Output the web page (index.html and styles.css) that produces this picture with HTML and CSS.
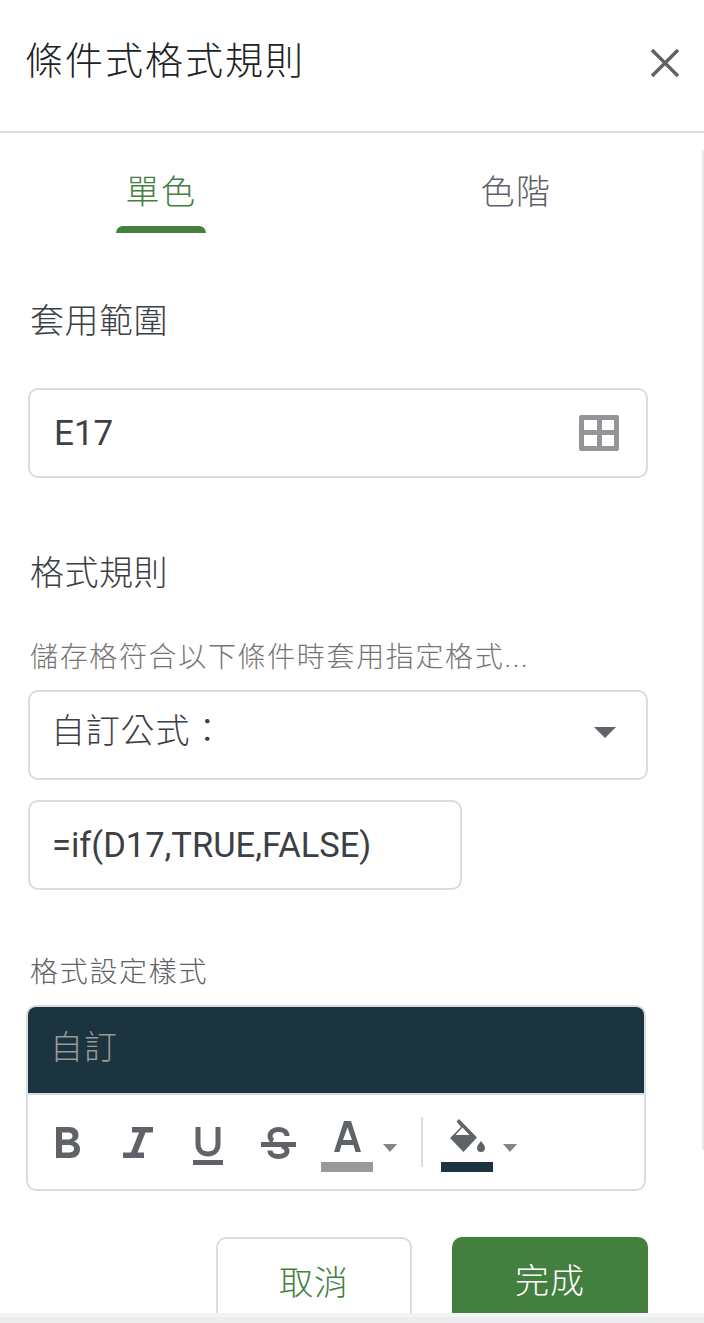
FILE: index.html
```html
<!DOCTYPE html>
<html lang="zh-Hant">
<head>
  <meta charset="UTF-8" />
  <title>條件式格式規則</title>
  <link rel="stylesheet" href="styles.css">
</head>
<body>

  <div class="panel">
    <div class="header">
      <div class="title">條件式格式規則</div>
      <svg class="close" width="30" height="30" viewBox="0 0 30 30"><path d="M2 2 L28 28 M28 2 L2 28" stroke="#5f6368" stroke-width="3.4" fill="none"/></svg>
    </div>

    <div class="content">
      <div class="tabs">
        <div class="tab active">單色</div>
        <div class="tab">色階</div>
      </div>

      <div class="section-title range-title">套用範圍</div>
      <div class="field range-field">
        <span>E17</span>
        <svg width="40" height="36" viewBox="0 0 40 36"><path fill-rule="evenodd" fill="#939598" d="M2 0 H38 a2 2 0 0 1 2 2 V34 a2 2 0 0 1 -2 2 H2 a2 2 0 0 1 -2 -2 V2 a2 2 0 0 1 2 -2 Z M5 5 V15 H18 V5 Z M23 5 V15 H35 V5 Z M5 20 V31 H18 V20 Z M23 20 V31 H35 V20 Z"/></svg>
      </div>

      <div class="section-title rule-title">格式規則</div>
      <div class="hint">儲存格符合以下條件時套用指定格式...</div>
      <div class="field select-field">
        <span>自訂公式：</span>
        <div class="caret"></div>
      </div>
      <div class="field formula-field">=if(D17,TRUE,FALSE)</div>

      <div class="style-label">格式設定樣式</div>
      <div class="style-box">
        <div class="preview">自訂</div>
        <div class="toolbar">
          <svg class="tool tool-bold" width="24" height="31" viewBox="0 0 24 31"><path fill-rule="evenodd" fill="#5f6368" d="M0 0 H13 C19 0 22.500 3 22.500 8 C22.500 11 21 13.500 18 14.500 C21.500 15.500 24 18 24 22 C24 28 20 31 14 31 H0 Z M6 5.500 V12.500 H12 C15 12.500 16.500 11 16.500 9 C16.500 6.800 15 5.500 12 5.500 Z M6 18 V25.500 H13 C16 25.500 18 24.500 18 21.800 C18 19.200 16 18 13 18 Z"/></svg>
          <svg class="tool tool-italic" width="30" height="31" viewBox="0 0 30 31"><path fill="#5f6368" d="M9 0 H30 V5.500 H22.500 L14.500 25.500 H21 V31 H0 V25.500 H8 L16 5.500 H9 Z"/></svg>
          <svg class="tool tool-under" width="30" height="38" viewBox="0 0 30 38"><path fill="none" stroke="#5f6368" stroke-width="5" d="M5 0 V17 C5 23 9 27 15 27 C21 27 25 23 25 17 V0"/><rect x="0" y="33" width="30" height="5" fill="#5f6368"/></svg>
          <svg class="tool tool-strike" width="35" height="32" viewBox="0 0 35 32"><path fill="none" stroke="#5f6368" stroke-width="5" d="M26 9 C26 4.500 22 2.500 17.500 2.500 C13 2.500 9 5 9 9 C9 11 10 13 12 14 M21 19 C24 20 26 21.500 26 24 C26 27.500 22 29.500 17.500 29.500 C13 29.500 9 27.500 9 23.500"/><rect x="0" y="15" width="35" height="5" fill="#5f6368"/></svg>
          <div class="color-tool">
            <div class="color-icon">
              <svg width="27" height="31" viewBox="0 0 27 31"><path fill-rule="evenodd" fill="#5f6368" d="M10 0 H17 L27 31 H21.500 L19.500 24 H7.500 L5.500 31 H0 Z M13.500 6.500 L9 19 H18 Z"/></svg>
              <div class="color-bar grey"></div>
            </div>
            <div class="mini-caret"></div>
          </div>
          <div class="tool-sep"></div>
          <div class="color-tool">
            <div class="color-icon">
              <svg width="35" height="33" viewBox="0 0 35 33"><path fill-rule="evenodd" fill="#5f6368" d="M9 0 L27 18.500 L13.500 33 L0 19 L11 8 L6.500 2.500 Z M12.500 8.500 L5.500 16 H19.500 Z"/><path fill="#5f6368" d="M31 22 C33.500 25.500 35 27 35 29 C35 31.500 33.500 33 31 33 C28.500 33 27 31.500 27 29 C27 27 28.500 25.500 31 22 Z"/></svg>
              <div class="color-bar dark"></div>
            </div>
            <div class="mini-caret"></div>
          </div>
        </div>
      </div>

      <div class="actions">
        <div class="btn btn-cancel">取消</div>
        <div class="btn btn-done">完成</div>
      </div>
    </div>

    <div class="scroll-line"></div>
    <div class="bottom-bar"></div>
  </div>

</body>
</html>
```

FILE: styles.css
```css
* {
  box-sizing: border-box;
  margin: 0;
  padding: 0;
}
body {
  background: white;
  font-family: Roboto, 'Noto Sans CJK TC', sans-serif;
  font-weight: 300;
}
.panel {
  position: relative;
  width: 704px;
  height: 1323px;
  overflow: hidden;
  display: flex;
  flex-direction: column;
}
.header {
  height: 133px;
  flex: none;
  display: flex;
  justify-content: space-between;
  align-items: flex-start;
  padding: 37px 24px 0 25px;
  border-bottom: 2px solid #dadce0;
}
.title {
  font-size: 38px;
  line-height: 48px;
  letter-spacing: 2px;
  color: #202124;
}
.close {
  margin-top: 11px;
}

.tabs {
  display: flex;
  gap: 265px;
  padding-left: 116px;
  height: 100px;
}
.tab {
  width: 90px;
  height: 100px;
  padding-top: 36px;
  text-align: center;
  font-size: 34px;
  line-height: 46px;
  letter-spacing: 1.5px;
  color: #5f6368;
}
.tab.active {
  color: #43803f;
  position: relative;
}
.tab.active::after {
  content: "";
  position: absolute;
  left: 0;
  right: 0;
  bottom: 0;
  height: 7px;
  background: #43803f;
  border-radius: 7px 7px 0 0;
}

.section-title {
  font-size: 34px;
  line-height: 46px;
  letter-spacing: 0.5px;
  color: #3c4043;
  margin-left: 30px;
}
.range-title {
  margin-top: 65px;
}
.rule-title {
  margin-top: 72px;
}
.field {
  display: flex;
  align-items: center;
  justify-content: space-between;
  height: 90px;
  margin-left: 28px;
  width: 620px;
  border: 2px solid #dadce0;
  border-radius: 10px;
  font-size: 35px;
  color: #3c4043;
}
.range-field {
  margin-top: 44px;
  padding: 0 27px 0 24px;
  font-weight: 400;
}
.hint {
  margin: 42px 0 0 30px;
  font-size: 28px;
  line-height: 40px;
  letter-spacing: 1.65px;
  color: #757575;
}
.select-field {
  margin-top: 12px;
  padding: 0 30px 6px 21px;
  font-size: 34px;
  letter-spacing: 0.8px;
}
.select-field span {
  margin-bottom: 8px;
}
.caret {
  width: 0;
  height: 0;
  border-left: 11px solid transparent;
  border-right: 11px solid transparent;
  border-top: 11px solid #5f6368;
}
.formula-field {
  margin-top: 20px;
  width: 434px;
  padding-left: 22px;
  justify-content: flex-start;
  font-weight: 400;
  font-size: 34.500px;
}

.style-label {
  margin: 63px 0 0 30px;
  font-size: 28px;
  line-height: 40px;
  letter-spacing: 1.7px;
  color: #5f6368;
}
.style-box {
  margin: 12px 0 0 26px;
  width: 620px;
  height: 186px;
  border: 2px solid #dadce0;
  border-radius: 10px;
  overflow: hidden;
}
.preview {
  height: 86px;
  background: #1c3440;
  color: #9a9a9a;
  font-size: 33px;
  line-height: 82px;
  letter-spacing: 1px;
  padding-left: 22px;
}
.toolbar {
  border-top: 2px solid #dadce0;
  display: flex;
  align-items: flex-start;
  height: 96px;
  padding: 32px 0 0 28px;
}
.tool {
  flex: none;
}
.tool-bold {
  margin-right: 43px;
}
.tool-italic {
  margin-right: 40px;
}
.tool-under {
  margin-right: 38px;
}
.tool-strike {
  margin-right: 25px;
}
.color-tool {
  display: flex;
  margin-top: -8px;
}
.color-icon {
  width: 52px;
  height: 53px;
  display: flex;
  flex-direction: column;
  align-items: center;
  justify-content: flex-end;
}
.color-bar {
  width: 52px;
  height: 10px;
  margin-top: 10px;
  flex: none;
}
.grey {
  background: #9a9a9a;
}
.dark {
  background: #1c3440;
}
.mini-caret {
  width: 0;
  height: 0;
  margin: 25px 0 0 10px;
  border-left: 7px solid transparent;
  border-right: 7px solid transparent;
  border-top: 8px solid #80868b;
}
.tool-sep {
  width: 2px;
  height: 50px;
  margin: -10px 18px 0 24px;
  background: #dadce0;
}

.actions {
  display: flex;
  justify-content: flex-end;
  gap: 40px;
  width: 648px;
  margin-top: 46px;
}
.btn {
  width: 196px;
  height: 90px;
  border-radius: 10px;
  text-align: center;
  font-size: 34px;
  line-height: 88px;
  letter-spacing: 1px;
}
.btn-cancel {
  border: 2px solid #dadce0;
  color: #43803f;
}
.btn-done {
  background: #43803f;
  color: white;
}

.scroll-line {
  position: absolute;
  top: 150px;
  right: 0;
  width: 2px;
  height: 1000px;
  background: #e8e8e8;
}
.bottom-bar {
  position: absolute;
  left: 0;
  right: 0;
  bottom: 0;
  height: 10px;
  background: #ebedef;
  border-top: 4px solid #f3f4f5;
}
```
